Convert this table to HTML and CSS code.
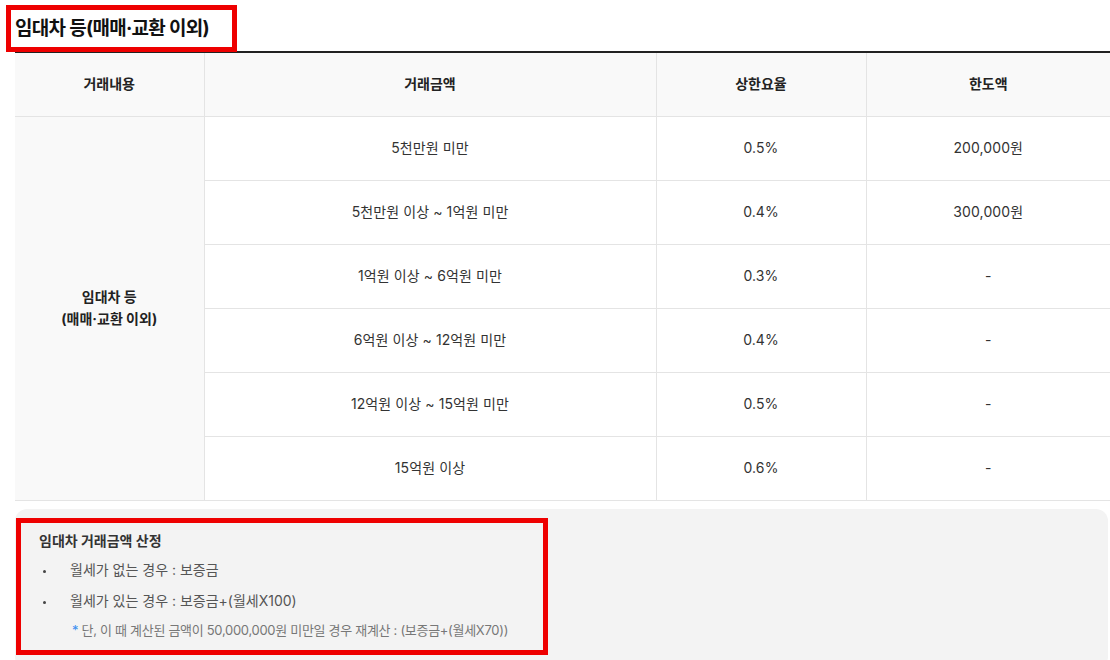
FILE: index.html
```html
<!DOCTYPE html>
<html lang="ko">
<head>
<meta charset="utf-8">
<title>임대차 등(매매·교환 이외)</title>
<link rel="stylesheet" href="styles.css">
</head>
<body>
<section class="section">
  <h2 class="title">임대차 등(매매·교환 이외)</h2>
  <span class="mark mark-title"></span>
  <table class="fee">
    <colgroup>
      <col class="c1"><col class="c2"><col class="c3"><col class="c4">
    </colgroup>
    <thead>
      <tr><th>거래내용</th><th>거래금액</th><th>상한요율</th><th>한도액</th></tr>
    </thead>
    <tbody>
      <tr><th rowspan="6" class="kind">임대차 등<br>(매매·교환 이외)</th><td>5천만원 미만</td><td>0.5%</td><td>200,000원</td></tr>
      <tr><td>5천만원 이상 ~ 1억원 미만</td><td>0.4%</td><td>300,000원</td></tr>
      <tr><td>1억원 이상 ~ 6억원 미만</td><td>0.3%</td><td>-</td></tr>
      <tr><td>6억원 이상 ~ 12억원 미만</td><td>0.4%</td><td>-</td></tr>
      <tr><td>12억원 이상 ~ 15억원 미만</td><td>0.5%</td><td>-</td></tr>
      <tr><td>15억원 이상</td><td>0.6%</td><td>-</td></tr>
    </tbody>
  </table>
  <div class="note">
    <div class="note-box">
      <p class="note-title">임대차 거래금액 산정</p>
      <ul class="note-list">
        <li>월세가 없는 경우 : 보증금</li>
        <li>월세가 있는 경우 : 보증금+(월세X100)</li>
      </ul>
      <p class="note-sub"><span class="star">*</span> 단, 이 때 계산된 금액이 50,000,000원 미만일 경우 재계산 : (보증금+(월세X70))</p>
    </div>
  </div>
</section>
</body>
</html>
```

FILE: styles.css
```css
* { box-sizing: border-box; }
html, body { margin: 0; padding: 0; background: #fff; }
body {
  font-family: "Inter", "Noto Sans CJK KR", sans-serif;
  color: #333;
  font-size: 14px;
}
.section {
  position: relative;
  padding-left: 15px;
}
.title {
  margin: 0;
  padding: 14px 0 7px;
  font-size: 19px;
  line-height: 30px;
  font-weight: 700;
  color: #111;
  letter-spacing: -0.7px;
}
.mark {
  position: absolute;
  border: 5px solid #ee0000;
  pointer-events: none;
}
.mark-title {
  left: 6px;
  top: 5px;
  width: 231px;
  height: 47px;
}
.fee {
  width: 1095px;
  border-collapse: collapse;
  border-top: 2px solid #222;
  table-layout: fixed;
}
.c1 { width: 189px; }
.c2 { width: 452px; }
.c3 { width: 210px; }
.c4 { width: 244px; }
.fee th, .fee td {
  border: 1px solid #e4e4e4;
  text-align: center;
  vertical-align: middle;
  padding: 0;
  font-size: 14px;
  line-height: 22px;
}
.fee tr > :first-child { border-left: 0; }
.fee tr > :last-child { border-right: 0; }
.fee thead th {
  height: 64px;
  background: #f9f9f9;
  font-weight: 700;
  color: #222;
}
.fee tbody td {
  height: 64px;
  color: #333;
  background: #fff;
  letter-spacing: 0.1px;
}
.fee .kind {
  background: #f9f9f9;
  font-weight: 700;
  color: #222;
  border-left: 0;
}
.note {
  margin-top: 8px;
  width: 1093px;
  background: #f3f3f3;
  border-radius: 12px;
  padding: 9px 0 14px 1px;
}
.note-box {
  width: 532px;
  border: 5px solid #ee0000;
  padding: 8px 18px 10px;
}
.note-title {
  margin: 0;
  font-size: 14px;
  line-height: 20px;
  font-weight: 700;
  color: #333;
}
.note-list {
  list-style: none;
  margin: 9px 0 0;
  padding: 0;
}
.note-list li {
  position: relative;
  padding-left: 31px;
  font-size: 14px;
  line-height: 20px;
  color: #555;
}
.note-list li + li { margin-top: 11px; }
.note-list li::before {
  content: "";
  position: absolute;
  left: 4px;
  top: 10px;
  width: 3px;
  height: 3px;
  border-radius: 50%;
  background: #444;
}
.note-sub {
  margin: 9px 0 0;
  padding-left: 33px;
  font-size: 13px;
  line-height: 20px;
  color: #777;
  letter-spacing: -0.3px;
}
.star { color: #3b8ef0; }
```
